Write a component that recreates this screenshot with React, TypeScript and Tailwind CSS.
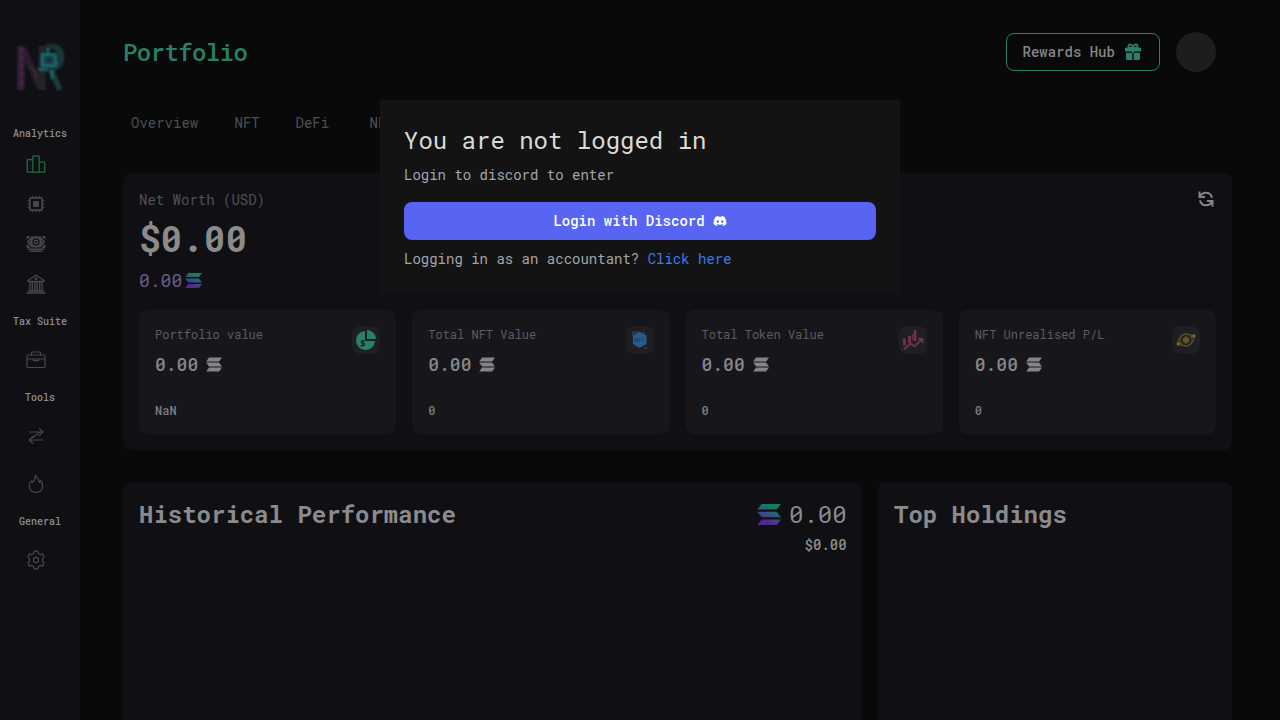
import React from "react";
import { IoPodiumOutline } from "react-icons/io5";
import { FaDiscord } from "react-icons/fa";

function Solana({ className, fill }: { className: string; fill: string }) {
  return (
    <svg className={className} viewBox="0 0 24 21" fill={fill}>
      <path d="M4.6 0H24L19.6 6H0.3Z" />
      <path d="M0.3 7.5H19.6L24 13.5H4.6Z" />
      <path d="M4.6 15H24L19.6 21H0.3Z" />
    </svg>
  );
}

function SolanaColor({ className, id }: { className: string; id: string }) {
  return (
    <svg className={className} viewBox="0 0 24 21">
      <defs>
        <linearGradient id={id} x1="18" y1="0" x2="8" y2="21" gradientUnits="userSpaceOnUse">
          <stop offset="0.1" stopColor="#12805c" />
          <stop offset="0.5" stopColor="#345480" />
          <stop offset="0.85" stopColor="#4e2890" />
        </linearGradient>
      </defs>
      <g fill={`url(#${id})`}>
        <path d="M4.6 0H24L19.6 5.6H0.3Z" />
        <path d="M0.3 7.7H19.6L24 13.3H4.6Z" />
        <path d="M4.6 15.4H24L19.6 21H0.3Z" />
      </g>
    </svg>
  );
}

function Logo() {
  return (
    <svg className="h-[54px] w-[52px]" viewBox="0 0 52 54">
      <defs>
        <linearGradient id="logoN" gradientUnits="userSpaceOnUse" x1="3" y1="0" x2="32" y2="0">
          <stop offset="0" stopColor="#38203a" />
          <stop offset="0.5" stopColor="#271c27" />
          <stop offset="1" stopColor="#1d282b" />
        </linearGradient>
        <linearGradient id="logoR" gradientUnits="userSpaceOnUse" x1="27" y1="0" x2="50" y2="0">
          <stop offset="0" stopColor="#1a2a2e" />
          <stop offset="1" stopColor="#123a3c" />
        </linearGradient>
        <filter id="soft"><feGaussianBlur stdDeviation="0.8" /></filter>
      </defs>
      <g filter="url(#soft)" fill="none">
        <path d="M7 5V49M9 8L27 48M28 5V49" stroke="url(#logoN)" strokeWidth="7" />
        <path d="M7.5 7V48" stroke="#48294a" strokeWidth="3" strokeDasharray="5 3" />
        <path d="M31 6H40Q48 8 47 18Q46 27 36 28L46 49" stroke="url(#logoR)" strokeWidth="6" />
        <path d="M38 29L46 47" stroke="#1a5355" strokeWidth="2" strokeDasharray="4 2" />
        <rect x="28" y="13" width="14" height="12" rx="1" fill="#195054" stroke="#1f6d6f" strokeWidth="2" />
        <circle cx="35" cy="19" r="3.5" fill="#123039" />
        <path d="M24 28L34 29M38 29L38 38M34 12V7" stroke="#246b6c" strokeWidth="2.2" />
        <path d="M17 26L23 33L20 38" stroke="#3d2a31" strokeWidth="2" />
      </g>
    </svg>
  );
}

function Stroke({ children }: { children: React.ReactNode }) {
  return (
    <svg className="size-5 text-[#47474b]" viewBox="0 0 20 20" fill="none" stroke="currentColor" strokeWidth="1.2" strokeLinecap="round" strokeLinejoin="round">
      {children}
    </svg>
  );
}

function Sidebar() {
  const label = "flex h-4 w-20 items-center justify-center text-[10px] font-medium leading-4 text-[#8b8b8d]";
  return (
    <aside className="flex w-20 shrink-0 flex-col bg-[#101014]">
      <div className="flex h-[126px] justify-center pt-[41px]"><Logo /></div>
      <div className={label}>Analytics</div>
      <nav className="flex flex-col gap-5 pl-[26px] pt-3">
        <IoPodiumOutline className="size-5 text-[#1b6e42]" />
        <Stroke>
          <rect x="3.8" y="3.8" width="12.4" height="12.4" rx="1.8" strokeWidth="1.8" />
          <rect x="7" y="7" width="6" height="6" rx="1" fill="currentColor" stroke="none" />
          <path d="M6.5 2v1M10 2v1M13.5 2v1M6.5 17v1M10 17v1M13.5 17v1M2 6.5h1M2 10h1M2 13.5h1M17 6.5h1M17 10h1M17 13.5h1" strokeWidth="0.9" />
        </Stroke>
        <Stroke>
          <path d="M1.2 2.5h2.2L1.2 4.7zM18.8 2.5h-2.2l2.2 2.2zM1.2 13.3h2.2l-2.2-2.2zM18.8 13.3h-2.2l2.2-2.2z" fill="currentColor" />
          <path d="M2 15.3h16M4 17.2h12" strokeWidth="1.4" />
          <path d="M6 3L2 7.9 6 12.8M14 3L18 7.9 14 12.8" strokeWidth="1.8" />
          <circle cx="10" cy="7.9" r="4.7" strokeWidth="2.2" />
          <circle cx="10" cy="7.9" r="1.7" strokeWidth="1.4" />
        </Stroke>
        <Stroke>
          <path d="M1 19h18M2.5 17h15M2 6.5L10 1l8 5.5v1H2zM4 8v9M6.3 8v9M8.9 8v9M11.1 8v9M13.7 8v9M16 8v9" strokeWidth="1.4" />
          <circle cx="10" cy="4.5" r="1" />
        </Stroke>
      </nav>
      <div className={`${label} mt-[20px]`}>Tax Suite</div>
      <div className="pl-[26px] pt-5">
        <Stroke>
          <rect x="1" y="5" width="18" height="12.5" rx="0.8" />
          <path d="M5.5 4.8V3q0-1 1-1h7q1 0 1 1v1.8M1 9h18M7 9q0 1.7 1 1.7h4q1 0 1-1.7" />
        </Stroke>
      </div>
      <div className={`${label} mt-5`}>Tools</div>
      <div className="flex flex-col gap-7 pl-[26px] pt-5">
        <Stroke><path d="M3.5 6H16.7M13.2 2.3L16.8 6L13.2 9.7M3.5 14H16.7M6.9 10.3L3.3 14L6.9 17.7M6 12L13.2 6.5" strokeWidth="1.1" /></Stroke>
        <Stroke><path d="M9.2 1.5C9.8 4.8 8.2 6.6 6.7 8.2Q5.900 7.700 5.500 7Q3.300 9 3.300 12Q3.800 18.300 10 18.300Q16.400 18.300 16.700 12Q16.500 8.500 14.500 6.700Q14.200 7.900 13.200 8.500Q12.700 4 9.200 1.500Z" /></Stroke>
      </div>
      <div className={`${label} mt-5`}>General</div>
      <div className="pl-[26px] pt-5">
        <Stroke>
          <path d="M8.2 1.2h3.6l.6 2.4 1.8 1 2.3-.7 1.8 3.1-1.7 1.7v2.6l1.7 1.7-1.8 3.1-2.3-.7-1.8 1-.6 2.4H8.2l-.6-2.4-1.8-1-2.3.7L1.7 13l1.7-1.7V8.7L1.7 7l1.8-3.1 2.3.7 1.8-1z" />
          <circle cx="10" cy="10" r="2.6" />
        </Stroke>
      </div>
    </aside>
  );
}

const gift = (
  <svg className="size-[18px]" viewBox="0 0 18 18" fill="#2b806a">
    <path d="M2 4.500H8.300V8.500H1V5.500Q1 4.500 2 4.500ZM9.700 4.500H16Q17 4.500 17 5.500V8.500H9.700ZM2 9.700H8.300V17H3.500Q2 17 2 15.500ZM9.700 9.700H16V15.500Q16 17 14.500 17H9.700Z" />
    <path d="M8.800 5Q4.300 5.200 4.300 3Q4.500 1.300 6.200 1.300Q8.500 1.600 8.800 5Q9.300 1.600 11.800 1.300Q13.500 1.300 13.700 3Q13.700 5.200 8.800 5Z" fill="none" stroke="#2b806a" strokeWidth="1.700" />
    <path d="M8 4H10V9.700H8Z" />
  </svg>
);

const pie = (
  <svg className="size-[22px]" viewBox="0 0 22 22">
    <path d="M10 2A9.500 9.500 0 1 0 20 12H10Z" fill="#298069" />
    <path d="M12 1A9 9 0 0 1 21 10H12Z" fill="#298069" />
    <path d="M9.600 12.400Q7 10.800 6.200 12.700Q6 14 8 14.200Q10.200 14.700 9.200 16.300Q7.800 17.600 5.700 16.200M7.800 10.800v7" fill="none" stroke="#172821" strokeWidth="1.200" />
  </svg>
);
const hex = (
  <svg className="size-5" viewBox="0 0 20 20">
    <path d="M9.500 1.500L16.500 5.500V14L9.500 18L3 14V5.500Z" fill="#2a5c8a" />
    <path d="M3 2.500L7 2M3 1.500V6M13 3H15" stroke="#24486a" strokeWidth="1.400" />
    <path d="M5 12V8L7.300 12V8M9 12V8H11M9 10H10.700M12 8H14.500M13.200 8V12" stroke="#1c4168" strokeWidth="1" fill="none" />
    <circle cx="15.700" cy="18" r="1.100" fill="#2b5a80" />
  </svg>
);
const bars = (
  <svg className="size-[22px]" viewBox="0 0 22 22" fill="none" stroke="#703349">
    <path d="M2.500 9.500V16.500M7.500 7V14M13 1V12" strokeWidth="2.800" />
    <path d="M10.300 5V11" strokeWidth="1.200" />
    <path d="M2 20.500L8.500 14.500L12.500 17.500L19.500 10.500M16.500 10H20.500V14" strokeWidth="1.900" />
  </svg>
);
const orbit = (
  <svg className="size-5" viewBox="0 0 20 20" fill="none" stroke="#5c5127">
    <circle cx="10" cy="10" r="6.200" strokeWidth="1.300" />
    <circle cx="10" cy="10" r="3.200" fill="#665426" stroke="#50441f" />
    <path d="M1.500 14Q1.500 9 5 6Q10 2.500 17 5.500M18.500 6Q18.500 11 15 14Q10 17.500 3 14.500" strokeWidth="1" />
    <circle cx="2.300" cy="14" r="1.700" fill="#796937" stroke="none" />
    <circle cx="17.800" cy="6" r="1.700" fill="#796937" stroke="none" />
  </svg>
);

const stats = [
  { label: "Portfolio value", note: "NaN", icon: pie },
  { label: "Total NFT Value", note: "0", icon: hex },
  { label: "Total Token Value", note: "0", icon: bars },
  { label: "NFT Unrealised P/L", note: "0", icon: orbit },
];

export default function App() {
  return (
    <div className="relative flex h-[720px] w-[1280px] overflow-hidden bg-[#090909] font-['Roboto_Mono','Liberation_Mono',monospace]">
      <Sidebar />
      <main className="flex min-w-0 flex-1 flex-col pl-[43px] pr-12">
        <header className="flex h-[71px] items-center justify-between pr-4 pt-[32px]">
          <h1 className="text-2xl font-medium tracking-tight text-[#2b806a]">Portfolio</h1>
          <div className="flex items-center gap-4">
            <button className="flex h-[38px] w-[154px] items-center gap-[9px] rounded-lg border border-[#2b806a] pl-[15.5px] text-sm font-medium text-[#858585]">
              Rewards Hub
              {gift}
            </button>
            <div className="size-10 rounded-full bg-[#1d1d1d]" />
          </div>
        </header>
        <nav className="mt-[42px] flex h-5 pl-2 text-sm leading-5 text-[#4b5055]">
          <span className="w-[103.500px]">Overview</span>
          <span className="w-[61px]">NFT</span>
          <span className="w-[74px]">DeFi</span>
          <span>NFT</span>
        </nav>
        <section className="mt-10 flex h-[277px] shrink-0 flex-col rounded-lg bg-[#101014] px-4 pt-[17px]">
          <div className="flex justify-between">
            <div>
              <div className="text-sm leading-5 text-[#4d5158]">Net Worth (USD)</div>
              <div className="text-4xl font-bold leading-[56px] text-[#8b8b8b]">$0.00</div>
              <div className="flex h-[27px] items-center gap-[3px] pt-[2px] text-lg leading-[25px] text-[#6a5b8d]">
                0.00 <SolanaColor className="h-[15px] w-[17px]" id="solSmall" />
              </div>
            </div>
            <svg className="mr-[2px] mt-[1px] size-4" viewBox="0 0 16 16" fill="none" stroke="#858587" strokeWidth="2">
              <path d="M1.500 0.500V6H7M2 5.500Q4.200 1.500 8.500 1.700Q13 2 14 6.800M14.500 15.500V10H9M14 10.500Q12 14.500 7.800 14.300Q3 14 2 9.200" />
            </svg>
          </div>
          <div className="mt-[17px] grid h-[124px] grid-cols-4 gap-4">
            {stats.map((s) => (
              <div key={s.label} className="flex justify-between rounded-lg bg-[#17171b] p-4">
                <div className="flex flex-col">
                  <span className="text-xs leading-4 text-[#5c5c60]">{s.label}</span>
                  <span className="mt-2 flex items-center gap-2 text-lg font-medium leading-7 text-[#858588]">
                    0.00 <Solana className="h-[15px] w-4" fill="#858588" />
                  </span>
                  <span className="mt-6 text-xs font-medium leading-4 text-[#7c7c7f]">{s.note}</span>
                </div>
                <div className="flex size-7 items-center justify-center rounded-lg bg-[#1e1e23]">{s.icon}</div>
              </div>
            ))}
          </div>
        </section>
        <div className="mt-8 flex flex-1 gap-4">
          <section className="flex w-[739px] justify-between rounded-t-lg bg-[#101014] pl-4 pr-[15.400px] pt-4">
            <h2 className="text-2xl font-bold leading-8 text-[#8b8b8d]">Historical Performance</h2>
            <div className="flex flex-col items-end">
              <div className="flex items-center gap-2 text-2xl leading-8 text-[#8b8b8d]">
                <SolanaColor className="h-[21px] w-6" id="solLarge" />0.00
              </div>
              <div className="mt-[5px] text-sm font-medium leading-5 text-[#8b8b8d]">$0.00</div>
            </div>
          </section>
          <section className="flex-1 rounded-t-lg bg-[#101014] px-4 pt-4">
            <h2 className="text-2xl font-bold leading-8 text-[#8b8b8d]">Top Holdings</h2>
          </section>
        </div>
      </main>
      <div role="dialog" className="absolute left-[380px] top-[100px] flex h-[194px] w-[520px] flex-col bg-[#131313] px-6 pt-6 text-sm text-[#a1a6ac]">
        <h2 className="text-2xl leading-8 text-[#dadada]">You are not logged in</h2>
        <p className="mt-[9px] leading-5">Login to discord to enter</p>
        <button className="mt-[17px] flex h-[38px] items-center justify-center gap-2 rounded-lg bg-[#5865f2] font-medium text-white">
          Login with Discord <FaDiscord className="size-[14px]" />
        </button>
        <p className="mt-[9px] leading-5">Logging in as an accountant? <a className="text-[#3b7af0]">Click here</a></p>
      </div>
    </div>
  );
}
